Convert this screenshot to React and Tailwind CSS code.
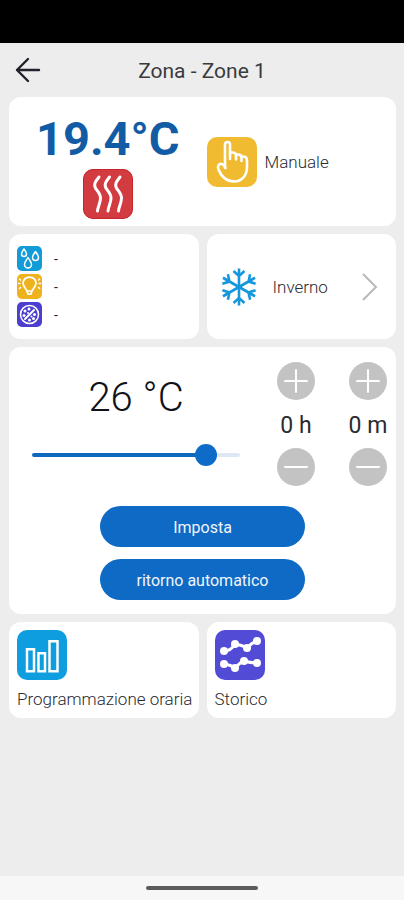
import React, { useState } from 'react';

const MIN_TEMP = 5;
const MAX_TEMP = 29;

const Tile = ({ className, children }) => (
  <svg viewBox="0 0 50 50" fill="none" stroke="white" strokeLinecap="round" strokeLinejoin="round" className={`shrink-0 ${className}`} aria-hidden="true">
    {children}
  </svg>
);

const HeatIcon = () => (
  <Tile className="size-[50px] rounded-[10px] bg-[#d23c41]">
    <rect x=".5" y=".5" width="49" height="49" rx="9.5" stroke="#c8252b" />
    <g strokeWidth="3">
      <path d="M16 8C12 13 11 15 12 18S17.500 24 17.500 29 15 37 14.500 42" />
      <path d="M26.500 8C22.500 13 21.500 15 22.500 18S28 24 28 29 25.500 37 25 42" />
      <path d="M37 8C33 13 32 15 33 18S38.500 24 38.500 29 36 37 35.500 42" />
    </g>
  </Tile>
);

const HandIcon = () => (
  <Tile className="size-[50px] rounded-[10px] bg-[#f1bb31]">
    <g strokeWidth="2.6">
      <path d="M18 31V7.500a2.500 2.500 0 0 1 5 0V22" />
      <path d="M23 15.500h2.500q3.500 0 3.500 3v4M29 17.500h2q3.500 0 3.500 3v3.500" />
      <path d="M34.500 19.500h1.500q4 0 4 4V30c0 8.500-5 14.500-13 14.500-9 0-13-6-15.500-12-1.500-4 1-6 3-5.500q3 .5 4 4" />
    </g>
  </Tile>
);

const DropsIcon = () => (
  <Tile className="size-[25px] rounded-[5px] bg-[#129bd7]">
    <g strokeWidth="3">
      <path d="M14 6c-3 5-5 7-5 10a5 5 0 0 0 10 0c0-3-2-5-5-10z" />
      <path d="M37 11c-4 6-6 8-6 12a6 6 0 0 0 12 0c0-4-2-6-6-12z" />
      <path d="M22 23c-4 7-7 9-7 14a7 7 0 0 0 14 0c0-5-3-7-7-14z" />
    </g>
  </Tile>
);

const BulbIcon = () => (
  <Tile className="size-[25px] rounded-[5px] bg-[#efb21f]">
    <path strokeWidth="3.5" d="M20 34c-1-4-8-8-8-16a13 12 0 0 1 26 0c0 8-7 12-8 16l-2 6h-6z" />
    <path strokeWidth="3" d="M20 34h10M5 10l2 2M3 19h3M5 29l2-2M45 10l-2 2M47 19h-3M45 29l-2-2" />
  </Tile>
);

const AirIcon = () => (
  <Tile className="size-[25px] rounded-[5px] bg-[#4c3fd0]">
    <circle cx="25" cy="25" r="18" strokeWidth="3" />
    <path strokeWidth="4" d="M16 34l18-18" />
    <g fill="white" stroke="none">
      <circle cx="16" cy="18" r="3" />
      <circle cx="24" cy="14" r="3" />
      <circle cx="14" cy="27" r="3" />
      <circle cx="35" cy="25" r="3" />
      <circle cx="33" cy="33" r="3" />
      <circle cx="25" cy="36" r="3" />
      <circle cx="22" cy="22" r="2" />
      <circle cx="29" cy="29" r="2" />
    </g>
  </Tile>
);

const ScheduleIcon = () => (
  <Tile className="size-[50px] rounded-[10px] bg-[#0e9ddf]">
    <path strokeWidth="2.5" strokeLinejoin="miter" d="M10 19.300h7v22h-7zM21.500 23.300h6.500v18h-6.500zM32.500 11.300h8v30h-8z" />
  </Tile>
);

const HistoryIcon = () => (
  <Tile className="size-[50px] rounded-[10px] bg-[#524bd6]">
    <path strokeWidth="3" d="M9 21q7 0 11-7 7 1 12 4 4-5 10-7M9 34q7 1 11 4 4-5 9-7 7 2 13 2" />
    <g fill="white" stroke="none">
      <circle cx="9" cy="21" r="4" />
      <circle cx="20" cy="14" r="4" />
      <circle cx="32" cy="18" r="4" />
      <circle cx="42" cy="11" r="4" />
      <circle cx="9" cy="34" r="4" />
      <circle cx="20" cy="38" r="4" />
      <circle cx="29" cy="31" r="4" />
      <circle cx="42" cy="33" r="4" />
    </g>
  </Tile>
);

const SnowflakeIcon = () => (
  <svg viewBox="-20 -20 40 40" fill="none" stroke="#1597dd" strokeWidth="2.600" className="size-10 shrink-0" aria-hidden="true">
    {[0, 60, 120, 180, 240, 300].map((angle) => (
      <path key={angle} transform={`rotate(${angle})`} d="M0 0v-18.500M-5.500 -16l5.500 5 5.500-5" />
    ))}
  </svg>
);

const RoundButton = ({ label, plus, onClick }) => (
  <button type="button" aria-label={label} onClick={onClick} className="flex size-[38px] items-center justify-center rounded-full bg-[#c3c3c3]">
    <svg viewBox="0 0 24 24" stroke="white" strokeWidth="2" strokeLinecap="round" className="size-6" aria-hidden="true">
      <path d={plus ? 'M1 12h22M12 1v22' : 'M1 12h22'} />
    </svg>
  </button>
);

const Stepper = ({ value, unit, name, max, onChange }) => (
  <div className="flex w-11 flex-col items-center">
    <RoundButton label={`Aumenta ${name}`} plus onClick={() => onChange(Math.min(max, value + 1))} />
    <span className="flex h-12 items-center whitespace-nowrap pt-1 text-[23px]">{value} {unit}</span>
    <RoundButton label={`Riduci ${name}`} onClick={() => onChange(Math.max(0, value - 1))} />
  </div>
);

const sensors = [
  { id: 'humidity', Icon: DropsIcon, value: '-' },
  { id: 'light', Icon: BulbIcon, value: '-' },
  { id: 'air', Icon: AirIcon, value: '-' },
];

const App = () => {
  const [temp, setTemp] = useState(26);
  const [hours, setHours] = useState(0);
  const [minutes, setMinutes] = useState(0);

  const fill = ((temp - MIN_TEMP) / (MAX_TEMP - MIN_TEMP)) * 100;

  return (
    <div className="flex min-h-screen w-full flex-col bg-[#ededed] font-[Roboto,sans-serif] text-[#2b2b30]">
      {/* STATUS BAR */}
      <div className="h-[43px] bg-black" />

      {/* HEADER */}
      <header className="grid h-[54px] grid-cols-[40px_1fr_40px] items-center px-2">
        <button type="button" aria-label="Indietro" className="flex h-10 items-center justify-center">
          <svg viewBox="0 0 26 26" fill="none" stroke="#22222c" strokeWidth="2.400" strokeLinecap="round" strokeLinejoin="round" className="size-[26px]" aria-hidden="true">
            <path d="M24 13H2M13 2L2 13l11 11" />
          </svg>
        </button>
        <h1 className="pt-1 text-center text-[21px] text-[#3a3a3e]">Zona - Zone 1</h1>
      </header>

      <main className="flex flex-1 flex-col gap-2 pl-[9px] pr-2">
        {/* CURRENT STATE */}
        <section className="grid h-[129px] grid-cols-2 rounded-xl bg-white">
          <div className="flex flex-col items-center pl-1 pt-[18px]">
            <p className="text-[47px] font-bold leading-[48px] text-[#115ca5]">19.4°C</p>
            <div className="mt-[6px]"><HeatIcon /></div>
          </div>
          <button type="button" className="flex items-center gap-2 pl-1 text-left text-[17px] font-light">
            <HandIcon />
            <span className="pt-0.5">Manuale</span>
          </button>
        </section>

        <div className="grid h-[105px] grid-cols-2 gap-2">
          <ul className="flex flex-col gap-[3px] rounded-xl bg-white px-2 pt-3">
            {sensors.map(({ id, Icon, value }) => (
              <li key={id} className="flex items-center gap-3 text-sm leading-none">
                <Icon />
                <span>{value}</span>
              </li>
            ))}
          </ul>
          <button type="button" className="flex items-center rounded-xl bg-white pl-3 pr-[18px] text-left">
            <SnowflakeIcon />
            <span className="flex-1 pl-[14px] pt-0.5 text-[17px] font-light">Inverno</span>
            <svg viewBox="0 0 16 28" fill="none" stroke="#b9b9b9" strokeWidth="2" className="h-7 w-4" aria-hidden="true">
              <path d="M1 1l13 13L1 27" />
            </svg>
          </button>
        </div>

        {/* SETPOINT */}
        <section className="flex h-[267px] flex-col rounded-xl bg-white pt-[15px]">
          <div className="flex justify-between pl-[23px] pr-[6px]">
            <div className="flex w-[208px] flex-col pt-[6px]">
              <label htmlFor="setpoint" className="text-center text-[40px] font-light leading-[60px] text-[#111118]">{temp} °C</label>
              <input
                id="setpoint"
                type="range"
                min={MIN_TEMP}
                max={MAX_TEMP}
                value={temp}
                onChange={(e) => setTemp(Number(e.target.value))}
                style={{ background: `linear-gradient(to right, #0e69bf ${fill}%, #dde8f3 ${fill}%)` }}
                className="mt-[25px] h-1 w-full appearance-none rounded-full [&::-webkit-slider-thumb]:size-[22px] [&::-webkit-slider-thumb]:appearance-none [&::-webkit-slider-thumb]:rounded-full [&::-webkit-slider-thumb]:bg-[#0e6cc8]"
              />
            </div>
            <div className="flex gap-7">
              <Stepper name="ore" unit="h" max={23} value={hours} onChange={setHours} />
              <Stepper name="minuti" unit="m" max={59} value={minutes} onChange={setMinutes} />
            </div>
          </div>
          <div className="mx-auto mt-5 flex w-[53%] flex-col gap-3">
            <button type="button" className="h-[41px] rounded-full bg-[#0e6ac4] pt-0.5 text-base text-[#f0f5fb]">Imposta</button>
            <button type="button" className="h-[41px] rounded-full bg-[#0e6ac4] pt-0.5 text-base text-[#f0f5fb]">ritorno automatico</button>
          </div>
        </section>

        {/* SHORTCUTS */}
        <div className="grid h-24 grid-cols-2 gap-2">
          <button type="button" className="flex flex-col gap-2 whitespace-nowrap rounded-xl bg-white p-2 text-left text-[17px] font-light leading-[22px]">
            <ScheduleIcon />
            Programmazione oraria
          </button>
          <button type="button" className="flex flex-col gap-2 whitespace-nowrap rounded-xl bg-white p-2 text-left text-[17px] font-light leading-[22px]">
            <HistoryIcon />
            Storico
          </button>
        </div>
      </main>

      {/* GESTURE BAR */}
      <footer className="flex h-6 items-center justify-center bg-[#f7f7f7]">
        <div className="h-1 w-28 rounded-full bg-[#5c5c5c]" />
      </footer>
    </div>
  );
};

export default App;
